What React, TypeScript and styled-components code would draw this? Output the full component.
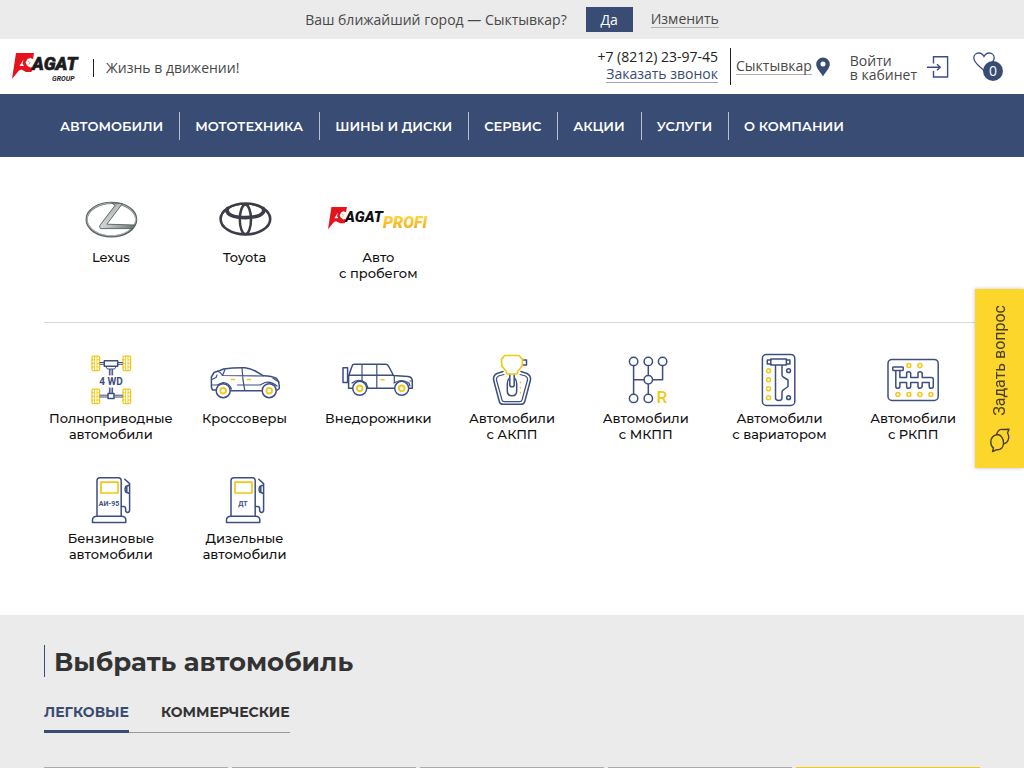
import React from "react";
import styled, { createGlobalStyle, css } from "styled-components";

const BLUE = "#394c74";
const LINE = "#3d4f80";
const YELLOW = "#f0c818";
const GREY = "#ebebeb";
const HEAD_FONT = `Montserrat, Inter, "Liberation Sans", sans-serif`;
const TEXT_FONT = `"Open Sans", "Noto Sans", sans-serif`;
const LOGO_FONT = `Roboto, "Liberation Sans", sans-serif`;

const GlobalStyle = createGlobalStyle`
  *, *::before, *::after { box-sizing: border-box; }
  body { margin: 0; background: #fff; color: #484848; font-family: ${TEXT_FONT}; font-size: 14px; }
  a { color: inherit; text-decoration: none; }
  button { border: 0; padding: 0; margin: 0; font: inherit; color: inherit; background: none; cursor: pointer; }
  ul { list-style: none; margin: 0; padding: 0; }
  svg { display: block; flex: none; }
`;

/* City confirmation bar */
const CityBar = styled.div`
  display: flex;
  align-items: center;
  justify-content: center;
  height: 39px;
  background: ${GREY};
`;
const CityQuestion = styled.span`
  margin-right: 19px;
`;
const YesButton = styled.button`
  width: 47px;
  height: 25px;
  margin-right: 18px;
  background: ${BLUE};
  color: #fff;
  font-weight: 500;
`;
const UnderlinedLink = styled.a<{ $blue?: boolean }>`
  line-height: 16px;
  border-bottom: 1px solid ${(p) => (p.$blue ? "#9aa5bd" : "#b0b0b0")};
  color: ${(p) => (p.$blue ? BLUE : "#484848")};
`;

/* Header */
const Header = styled.header`
  display: flex;
  align-items: center;
  height: 55px;
  padding: 0 21px 0 11px;
`;
const Slogan = styled.span`
  margin: 2px 0 0 12px;
  line-height: 18px;
  padding-left: 12px;
  border-left: 1px solid #222;
`;
const Contacts = styled.div`
  display: flex;
  flex-direction: column;
  align-items: flex-end;
  height: 37px;
  margin-left: auto;
  padding-right: 12px;
  border-right: 1px solid #222;
`;
const Phone = styled.a`
  color: #222;
  line-height: 18px;
`;
const City = styled.div`
  display: flex;
  align-items: center;
  gap: 4px;
  margin: 0 20px 0 5px;
`;
const Login = styled.a`
  display: flex;
  align-items: center;
  gap: 10px;
  line-height: 14px;
`;
const LoginLabel = styled.span`
  padding-top: 3px;
`;
const Favourites = styled.a`
  position: relative;
  margin-left: 24px;
  width: 30px;
  height: 29px;
`;
const Badge = styled.span`
  position: absolute;
  right: 0;
  bottom: 0;
  width: 20px;
  height: 20px;
  border-radius: 50%;
  background: ${BLUE};
  color: #fff;
  font-size: 14px;
  line-height: 20px;
  text-align: center;
`;

/* Main navigation */
const Nav = styled.nav`
  height: 63px;
  padding: 0 44px;
  background: ${BLUE};
`;
const NavList = styled.ul`
  display: flex;
  align-items: center;
  height: 100%;
`;
const NavItem = styled.li`
  padding: 0 16px;
  color: #fff;
  font: 600 13px/28px ${HEAD_FONT};
  white-space: nowrap;
  & + & {
    border-left: 1px solid #b8c0d0;
    padding-left: 15px;
  }
`;

/* Category grids */
const Categories = styled.section`
  padding: 32px 44px 53px;
`;
const Grid = styled.ul<{ $divided?: boolean }>`
  display: grid;
  grid-template-columns: repeat(7, 1fr);
  row-gap: 28px;
  ${(p) =>
    p.$divided &&
    css`
      padding-bottom: 41px;
      margin-bottom: 27px;
      border-bottom: 1px solid #d8d8d8;
    `}
`;
const Tile = styled.a`
  display: flex;
  flex-direction: column;
  align-items: center;
  color: #111;
  font: 500 13px/16px ${HEAD_FONT};
  text-align: center;
  white-space: pre-line;
`;

/* Car picker */
const Picker = styled.section`
  padding: 30px 44px 0;
  background: ${GREY};
`;
const PickerTitle = styled.h2`
  margin: 0;
  padding: 2px 0 0 9px;
  border-left: 1px solid ${BLUE};
  color: #333;
  font: 700 26px/30px ${HEAD_FONT};
`;
const Tabs = styled.div`
  display: flex;
  width: fit-content;
  gap: 32px;
  margin-top: 24px;
  border-bottom: 1px solid #999;
`;
const Tab = styled.button<{ $active?: boolean }>`
  height: 32px;
  margin-bottom: -1px;
  padding-bottom: 7px;
  border-bottom: 3px solid ${(p) => (p.$active ? BLUE : "transparent")};
  color: ${(p) => (p.$active ? BLUE : "#333")};
  font: 700 14px/20px ${HEAD_FONT};
`;
const Cards = styled.div`
  display: grid;
  grid-template-columns: repeat(5, 1fr);
  gap: 4px;
  margin-top: 34px;
`;
const Card = styled.div<{ $accent?: boolean }>`
  border-top: 1px solid ${(p) => (p.$accent ? YELLOW : "#aaa")};
`;

/* Side button */
const AskButton = styled.button`
  position: fixed;
  right: 0;
  top: 289px;
  display: flex;
  flex-direction: column;
  align-items: center;
  justify-content: space-between;
  width: 49px;
  height: 179px;
  padding: 16px 0 15px;
  background: #fdd62c;
  box-shadow: 0 0 4px rgba(0, 0, 0, 0.25);
  color: #4a4020;
  font: 400 16px/20px Roboto, sans-serif;
`;
const AskLabel = styled.span`
  writing-mode: vertical-rl;
  transform: rotate(180deg);
`;

/* Drawings */
const Icon = ({ children, w = 80 }: { children: React.ReactNode; w?: number }) => (
  <svg width={w} height="60" viewBox={`0 0 ${w} 60`} fill="none" stroke={LINE} strokeWidth="1.5" strokeLinejoin="round" strokeLinecap="round" aria-hidden="true">
    {children}
  </svg>
);

const AgatMark = () => (
  <>
    <path d="M4 0H22L21 6L18 5L15.5 6L13.5 9.5L15 12.5L18 14.5L20.5 14L19.5 19H14L9.5 16.5L7 17.5L0 26Z" fill="#e3141c" />
    <path d="M11.5 6.5L7.5 13H12L10.5 10.5Z" fill="#fff" />
    <path d="M16 8L18 9.5L16.8 11.5" fill="none" stroke="#f08a8e" strokeWidth="0.8" />
  </>
);

const Logo = () => (
  <svg width="70" height="32" viewBox="0 0 70 32" role="img" aria-label="Agat Group">
    <g transform="translate(1 2)"><AgatMark /></g>
    <text x="21" y="19" fontFamily={LOGO_FONT} fontSize="18" fontWeight="900" fontStyle="italic" fill="#1c1c1c" stroke="#1c1c1c" strokeWidth="0.6">AGAT</text>
    <text x="41" y="30" fontFamily={LOGO_FONT} fontSize="7" fontWeight="700" fontStyle="italic" fill="#1c1c1c">GROUP</text>
  </svg>
);

const ProfiLogo = () => (
  <Icon w={100}>
    <defs>
      <linearGradient id="gold" x1="0" y1="0" x2="0" y2="1">
        <stop offset="0" stopColor="#ffe14a" />
        <stop offset="1" stopColor="#f0a010" />
      </linearGradient>
    </defs>
    <g transform="translate(0 18) scale(0.86)" stroke="none"><AgatMark /></g>
    <text x="17" y="33" fontFamily={LOGO_FONT} fontSize="15" fontWeight="900" fontStyle="italic" fill="#111" stroke="none">AGAT</text>
    <text x="55" y="39" fontFamily={LOGO_FONT} fontSize="16" fontWeight="900" fontStyle="italic" fill="url(#gold)" stroke="none">PROFI</text>
  </Icon>
);

const Lexus = () => (
  <Icon>
    <defs>
      <linearGradient id="steel" x1="0" y1="0" x2="1" y2="1">
        <stop offset="0" stopColor="#8a9090" />
        <stop offset="0.5" stopColor="#d0d4d4" />
        <stop offset="1" stopColor="#666c6c" />
      </linearGradient>
    </defs>
    <ellipse cx="40.4" cy="30.6" rx="24.8" ry="16.8" stroke="#586060" strokeWidth="2.2" />
    <ellipse cx="40.4" cy="30.4" rx="24.4" ry="16.4" stroke="#c6cccc" strokeWidth="0.8" />
    <path d="M41 14L51.5 14.5L35.8 35.2L64 36L61.5 39.6H29.5Q27.5 38 29.5 35.5L44 16.5Z" fill="url(#steel)" stroke="#555d5d" strokeWidth="0.9" />
  </Icon>
);

const Toyota = () => (
  <Icon>
    <g stroke="#3d3d48">
      <ellipse cx="40.4" cy="30" rx="24.8" ry="15.5" strokeWidth="2.6" />
      <ellipse cx="40.4" cy="30.4" rx="5.6" ry="14.8" strokeWidth="2.5" />
      <path d="M22.6 19.5C20 25.5 29 28.6 40.4 28.6S61 25.5 58.2 19.5" strokeWidth="3.6" />
      <path d="M22.6 19.5Q29 14.8 40.4 14.8T58.2 19.5" strokeWidth="1.8" />
    </g>
  </Icon>
);

const Wheel = ({ x, y }: { x: number; y: number }) => (
  <g stroke={YELLOW} strokeWidth="1.3" transform={`translate(${x} ${y})`}>
    <rect x="0" y="0" width="7.6" height="14.4" rx="1.4" />
    <path d="M2.6 0V14.4M5 0V14.4M0 3.6H2.6M0 7.2H2.6M0 10.8H2.6M5 3.6H7.6M5 7.2H7.6M5 10.8H7.6" strokeWidth="0.9" />
  </g>
);

const FourWd = () => (
  <Icon>
    <Wheel x={21} y={6.2} /><Wheel x={52} y={6.2} /><Wheel x={21} y={39.2} /><Wheel x={52} y={39.2} />
    <path d="M29 12.5H33M29 14.3H33M47 12.5H51.5M47 14.3H51.5M29 45.2H36.5M29 47H36.5M43.5 45.2H51.5M43.5 47H51.5" strokeWidth="1" />
    <rect x="33.3" y="10.7" width="13.4" height="5.6" />
    <path d="M34.6 16.5L36.5 19H43.5L45.4 16.5M38.4 19.5V25M40 19.5V25M41.6 19.5V25M38.4 38V43M40 38V43M41.6 38V43" strokeWidth="1" />
    <rect x="37" y="43.4" width="6" height="5.2" />
    <text x="40" y="35" textAnchor="middle" fontFamily={LOGO_FONT} fontSize="10" fontWeight="700" fill={LINE} stroke="none">4 WD</text>
  </Icon>
);

const Hub = ({ x, y }: { x: number; y: number }) => (
  <>
    <circle cx={x} cy={y} r="7" fill="#fff" />
    <circle cx={x} cy={y} r="2.8" stroke={YELLOW} strokeWidth="1.8" />
  </>
);

const Crossover = () => (
  <Icon>
    <path d="M11 40H7.5L6.4 37V27L9 22.5L15 20.5L18.5 19Q28 17.5 40 17.7Q46 18.3 52 22L58.5 25.8Q67 26 71.5 28.5Q74.5 31.5 74.3 38.5L71 41M25.5 40.7H57" />
    <path d="M12.5 21Q16 22.5 17.5 25.5L58 26M17.5 25.5L20 19.5M37 17.8Q37.5 30 39.8 40.5M6.8 29.5L11 27.5L12 25M6.8 35H12L18 32.5Q24 32.5 26.5 39M32.5 35H55L60 32.5Q66 31 72 36M68 28.2L74 32" strokeWidth="1.2" />
    <path d="M26.5 29.4H29.5M42.5 29.4H45.5" stroke={YELLOW} />
    <Hub x={18.2} y={40.7} /><Hub x={64.2} y={40.7} />
  </Icon>
);

const OffRoad = () => (
  <Icon>
    <rect x="5" y="17.8" width="4.6" height="14.8" />
    <path d="M14 38.3H10.6V26L14 16.2Q14.5 14.3 16.5 14.3H47.5Q49.5 14.3 50.5 16L55.5 25.5L70 26.5Q74.3 27 74.3 31V38.3H71.5M29 38.3H56.5M10.6 25.3H55.5" />
    <path d="M24 14.5V30.5M38.8 14.5V38M56.3 25.5V33M14 33Q21 27.5 28 33L30 38M56 33Q63.5 28 71 33L72 36M72 31H74" strokeWidth="1.2" />
    <path d="M43 29.8H46" stroke={YELLOW} />
    <Hub x={21.7} y={38.3} /><Hub x={63.7} y={38.3} />
  </Icon>
);

const Automatic = () => (
  <Icon>
    <path d="M31 21.5L25 23.5Q21 25.5 21.6 30L27.3 51.5Q28 54.3 31 54.3H49Q52 54.3 52.8 51.5L58.5 30Q59 25.5 55 23.5L49 21.5" />
    <path d="M32 24.5L26.5 26Q24 27.5 24.5 30L30 50Q30.6 51.6 32.5 51.6H47.5Q49.5 51.6 50 50L55.5 30Q56 27.5 53.5 26L48 24.5" strokeWidth="1.2" />
    <path d="M37.5 28Q35.3 30 35.3 34V41Q35.3 45.8 40 45.8T44.7 41V34Q44.7 30 42.5 28" />
    <path d="M37.8 24.5V35Q37.8 36.8 40 36.8T42.2 35V24.5" fill="#fff" />
    <path d="M51 10H54.5V15H50" />
    <path d="M32.5 5.5H47L50.5 9.3L50.2 16L46 21L45 24H35L34 21L29.8 16L29.5 9.3Z" stroke={YELLOW} fill="#fff" strokeWidth="1.7" />
    <path d="M48.5 32.3V32.8M48.5 37.5V38M48.5 42.8V43.3" stroke={YELLOW} />
  </Icon>
);

const Manual = () => (
  <Icon>
    <path d="M27.6 15V44M42.3 15V44M27.6 29.7H56.6V15" />
    {[[27.6, 11.4], [42.3, 11.4], [56.6, 11.4], [42.3, 29.7], [27.6, 48.4], [42.3, 48.4]].map(([x, y]) => (
      <circle key={`${x}-${y}`} cx={x} cy={y} r="4.2" fill="#fff" />
    ))}
    <text x="50.5" y="52.5" fontFamily={LOGO_FONT} fontSize="17" fill={YELLOW} stroke="none">R</text>
  </Icon>
);

const Variator = () => (
  <Icon>
    <rect x="23.4" y="4.4" width="32.4" height="51" rx="4" />
    <path d="M36.5 15.5V48Q36.5 50.4 39.8 50.4T43 48V42Q43 40.5 45 39.5L49 36.5V30L45 27.5Q43 26.5 43 25V15.5" />
    <rect x="31.8" y="9" width="15.6" height="6" fill="#fff" />
    <path d="M31.8 10H28.3V14H31.8M47.4 10H50.9V14H47.4" />
    {[20.7, 29.7, 38.7, 47.7].map((y) => <circle key={y} cx="29.6" cy={y} r="2" stroke={YELLOW} />)}
    <circle cx="49.6" cy="20.7" r="1.9" /><circle cx="49.6" cy="47.7" r="1.9" />
  </Icon>
);

const Robotic = () => (
  <Icon>
    <rect x="15" y="9.4" width="50.2" height="41" rx="4" />
    <path d="M22.8 20.5V36.4Q22.8 38.2 24.8 38.2T26.9 36.4V32.5H33.6V36.4Q33.6 38.2 35.6 38.2T37.7 36.4V32.5H45V36.4Q45 38.2 47 38.2T49.2 36.4V32.5H56.2V36.4Q56.2 38.2 58.2 38.2T60.3 36.4V29.5Q60.3 27.5 58.3 27.5H49.2V23.5Q49.2 21.7 47.1 21.7T45 23.5V27.5H37.7V23.5Q37.7 21.7 35.6 21.7T33.6 23.5V27.5H26.9V20.5" />
    <rect x="19.8" y="17" width="10.4" height="3.4" rx="0.6" fill="#fff" />
    {[[35.9, 15.4], [46.9, 15.4], [24.9, 44.4], [35.9, 44.4], [46.9, 44.4], [57.9, 44.4]].map(([x, y]) => (
      <circle key={`${x}-${y}`} cx={x} cy={y} r="2" stroke={YELLOW} />
    ))}
  </Icon>
);

const Pump = ({ label }: { label: string }) => (
  <Icon>
    <path d="M26 46V10.5Q26 7.7 29 7.7H47.2Q50.2 7.7 50.2 10.5V46" />
    <path d="M26 46.2H50.5Q54.8 46.2 54.8 50V52.4H21.5V50Q21.5 46.2 26 46.2Z" />
    <rect x="30" y="12.2" width="17" height="10.8" stroke={YELLOW} strokeWidth="1.7" />
    <path d="M53.8 9.2L58.6 13.6V40Q58.6 42.4 56.6 42.4T54.6 40V38.5Q54.6 36.6 52.8 36.6H50.4M58.4 15L54.8 16.5Q53.3 19.5 54.8 22L58.4 23.5M55.8 17V22" />
    <text x="38" y="35.6" textAnchor="middle" fontFamily={LOGO_FONT} fontSize="7" fontWeight="700" fill={LINE} stroke="none">{label}</text>
  </Icon>
);

const Pin = () => (
  <svg width="14" height="20" viewBox="0 0 14 20" aria-hidden="true">
    <path fillRule="evenodd" fill={BLUE} d="M7 0.5A6.8 6.8 0 0 1 13.8 7.3C13.8 11.5 9.5 15 7 19.5C4.5 15 0.2 11.5 0.2 7.3A6.8 6.8 0 0 1 7 0.5ZM7 4.6A2.5 2.5 0 1 0 7 9.6A2.5 2.5 0 1 0 7 4.6Z" />
  </svg>
);

const LoginIcon = () => (
  <svg width="22" height="22" viewBox="0 0 22 22" fill="none" stroke={LINE} strokeWidth="1.4" aria-hidden="true">
    <path d="M6.5 7.5V0.8H20.6V21H6.5V15M0 11.3H13M10 8.3L13.2 11.3L10 14.3" />
  </svg>
);

const HeartIcon = () => (
  <svg width="22" height="20" viewBox="0 0 22 20" fill="none" stroke={LINE} strokeWidth="1.3" aria-hidden="true">
    <path d="M11 18.5C7 14.5 0.8 11 0.8 6C0.8 3 3 1 5.7 1C8.2 1 10 2.5 11 4.5C12 2.5 13.8 1 16.3 1C19 1 21.2 3 21.2 6C21.2 11 15 14.5 11 18.5Z" />
  </svg>
);

const ChatIcon = () => (
  <svg width="20" height="25" viewBox="0 0 20 25" fill="none" stroke="#4a4020" strokeWidth="1.4" strokeLinejoin="round" aria-hidden="true">
    <path d="M7.5 6.5C3.5 7 0.8 10 0.8 14.5C0.8 17 1.8 18.8 3.5 20L2.5 23.5L7 21.7C10.5 22 13.5 20 13.5 15C13.5 10.5 11 6.8 7.5 6.5Z" />
    <path d="M6.5 6.5C7.5 3 10 1 13 1.5L19 1.2L17.5 5C20 9 18.5 15 13.5 16" />
  </svg>
);

const navItems = ["АВТОМОБИЛИ", "МОТОТЕХНИКА", "ШИНЫ И ДИСКИ", "СЕРВИС", "АКЦИИ", "УСЛУГИ", "О КОМПАНИИ"];

const brands = [
  { label: "Lexus", icon: <Lexus /> },
  { label: "Toyota", icon: <Toyota /> },
  { label: "Авто\nс пробегом", icon: <ProfiLogo /> },
];

const types = [
  { label: "Полноприводные\nавтомобили", icon: <FourWd /> },
  { label: "Кроссоверы", icon: <Crossover /> },
  { label: "Внедорожники", icon: <OffRoad /> },
  { label: "Автомобили\nс АКПП", icon: <Automatic /> },
  { label: "Автомобили\nс МКПП", icon: <Manual /> },
  { label: "Автомобили\nс вариатором", icon: <Variator /> },
  { label: "Автомобили\nс РКПП", icon: <Robotic /> },
  { label: "Бензиновые\nавтомобили", icon: <Pump label="АИ-95" /> },
  { label: "Дизельные\nавтомобили", icon: <Pump label="ДТ" /> },
];

const Tiles = ({ items, divided }: { items: typeof brands; divided?: boolean }) => (
  <Grid $divided={divided}>
    {items.map((item) => (
      <li key={item.label}>
        <Tile href="#">
          {item.icon}
          <span>{item.label}</span>
        </Tile>
      </li>
    ))}
  </Grid>
);

export default function App() {
  return (
    <>
      <GlobalStyle />
      <CityBar>
        <CityQuestion>Ваш ближайший город — Сыктывкар?</CityQuestion>
        <YesButton>Да</YesButton>
        <UnderlinedLink href="#">Изменить</UnderlinedLink>
      </CityBar>
      <Header>
        <a href="#"><Logo /></a>
        <Slogan>Жизнь в движении!</Slogan>
        <Contacts>
          <Phone href="tel:+78212239745">+7 (8212) 23-97-45</Phone>
          <UnderlinedLink $blue href="#">Заказать звонок</UnderlinedLink>
        </Contacts>
        <City>
          <UnderlinedLink href="#">Сыктывкар</UnderlinedLink>
          <Pin />
        </City>
        <Login href="#">
          <LoginLabel>Войти<br />в кабинет</LoginLabel>
          <LoginIcon />
        </Login>
        <Favourites href="#">
          <HeartIcon />
          <Badge>0</Badge>
        </Favourites>
      </Header>
      <Nav>
        <NavList>
          {navItems.map((item) => (
            <NavItem key={item}><a href="#">{item}</a></NavItem>
          ))}
        </NavList>
      </Nav>
      <main>
        <Categories>
          <Tiles items={brands} divided />
          <Tiles items={types} />
        </Categories>
        <Picker>
          <PickerTitle>Выбрать автомобиль</PickerTitle>
          <Tabs>
            <Tab $active>ЛЕГКОВЫЕ</Tab>
            <Tab>КОММЕРЧЕСКИЕ</Tab>
          </Tabs>
          <Cards>
            <Card /><Card /><Card /><Card /><Card $accent />
          </Cards>
        </Picker>
      </main>
      <AskButton>
        <AskLabel>Задать вопрос</AskLabel>
        <ChatIcon />
      </AskButton>
    </>
  );
}
